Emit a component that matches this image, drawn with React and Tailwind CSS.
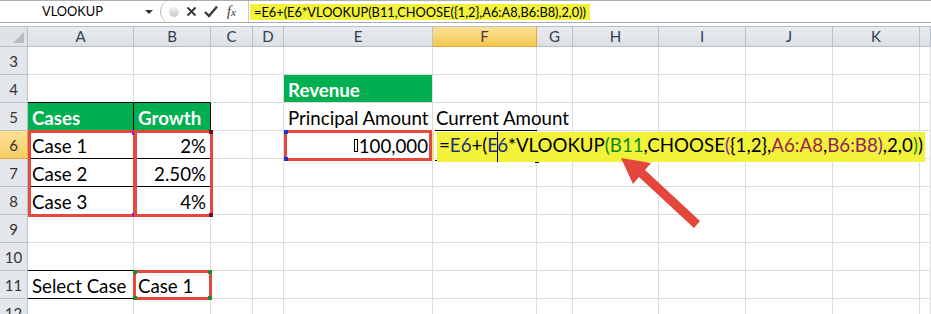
import React from 'react';

const COLS = ['A', 'B', 'C', 'D', 'E', 'F', 'G', 'H', 'I', 'J', 'K', ''];
const ROWS = [3, 4, 5, 6, 7, 8, 9, 10, 11, 12];

const FONT = { fontFamily: 'Lato, "Open Sans", sans-serif' };

function FormulaText() {
  return (
    <span className="relative z-10 bg-[#f2f23a] pl-[2px] pr-[2px] text-black whitespace-nowrap">
      =<span className="text-[#1d2f7a]">E6</span>+(<span className="text-[#1d2f7a]">E</span>
      <span className="inline-block w-px h-[30px] bg-black align-middle -mx-px"></span>
      <span className="text-[#1d2f7a]">6</span>*VLOOKUP<span className="text-[#0f8a17]">(B11</span>,CHOOSE
      <span className="text-[#8c1aa0]">(</span>{'{1,2},'}
      <span className="text-[#9c1f45]">A6:A8</span>,<span className="text-[#8f1d5f]">B6:B8</span>
      <span className="text-[#8c1aa0]">)</span>,2,0<span className="text-[#0f8a17]">)</span>)
    </span>
  );
}

const cells = {
  E4: { cls: 'bg-[#00b050] text-white font-bold pl-[4px]', node: 'Revenue' },
  A4: { cls: 'border-b-black' },
  B4: { cls: 'border-b-black' },
  A5: { cls: 'bg-[#00b050] text-white font-bold pl-[4px] border-r-black border-b-black', node: 'Cases' },
  B5: { cls: 'bg-[#00b050] text-white font-bold pl-[4px] border-r-black border-b-black', node: 'Growth' },
  E5: { cls: 'pl-[4px] overflow-hidden', node: 'Principal Amount' },
  F5: { cls: 'pl-[3px] overflow-visible', node: 'Current Amount' },
  A6: { cls: 'pl-[4px] border-r-black border-b-black', node: 'Case 1' },
  B6: { cls: 'justify-end pr-[4px] border-r-black border-b-black', node: '2%' },
  E6: {
    cls: 'justify-end pr-[4px]',
    node: (
      <>
        <span className="inline-block w-[4px] h-[13px] border border-black mr-[1px] mb-[2px]"></span>
        100,000
      </>
    ),
  },
  F6: { cls: 'pl-[4px] overflow-visible', node: <FormulaText /> },
  A7: { cls: 'pl-[4px] border-r-black border-b-black', node: 'Case 2' },
  B7: { cls: 'justify-end pr-[4px] border-r-black border-b-black', node: '2.50%' },
  A8: { cls: 'pl-[4px] border-r-black border-b-black', node: 'Case 3' },
  B8: { cls: 'justify-end pr-[4px] border-r-black border-b-black', node: '4%' },
  A10: { cls: 'border-b-black' },
  A11: { cls: 'pl-[4px] border-b-black', node: 'Select Case' },
  B11: { cls: 'pl-[4px]', node: 'Case 1' },
};

function FormulaBar() {
  return (
    <div className="flex h-[23px] border-t border-b border-[#a9aeb5] bg-white text-[12.8px] text-black">
      <div className="w-[160px] flex items-center pl-[42px] pr-[7px]">
        <span className="flex-1 leading-none">VLOOKUP</span>
        <span className="w-0 h-0 border-l-[4px] border-r-[4px] border-t-[4px] border-l-transparent border-r-transparent border-t-[#333]"></span>
      </div>
      <div className="w-[88px] flex items-center">
        <div className="self-stretch -my-px w-[20px] rounded-l-full border-l border-[#b4b9c0] flex items-center justify-end pr-[1px]">
          <span className="w-[10px] h-[10px] rounded-full bg-gradient-to-b from-[#f4f4f4] to-[#c6c6c6]"></span>
        </div>
        <svg className="ml-[6px]" width="11" height="11" viewBox="0 0 11 11">
          <path d="M1.5 1.5 L9.5 9.5 M9.5 1.5 L1.5 9.5" stroke="#3a3a3a" strokeWidth="2" />
        </svg>
        <svg className="ml-[7px]" width="14" height="13" viewBox="0 0 14 13">
          <path d="M1 7 L5 11 L13 1.5" stroke="#3a3a3a" strokeWidth="2.4" fill="none" />
        </svg>
        <span className="ml-[9px] italic text-[14px] text-[#333] leading-none" style={{ fontFamily: '"Liberation Serif", serif' }}>
          f<span className="text-[11px]">x</span>
        </span>
      </div>
      <div className="flex-1 flex items-center border-l border-[#c6cbd1] pl-[1px]">
        <span className="bg-[#f2f23a] px-[4px] leading-[16px] whitespace-nowrap">
          =E6+(E6*VLOOKUP(B11,CHOOSE({'{1,2}'},A6:A8,B6:B8),2,0))
        </span>
      </div>
    </div>
  );
}

function Arrow() {
  return (
    <svg className="absolute left-0 top-0 pointer-events-none z-20" width="931" height="314">
      <polygon
        points="621,158 651,163 645,170 700,221 694,228 639,177 633,184"
        fill="#e4463b"
      />
    </svg>
  );
}

export default function App() {
  return (
    <div className="w-[931px] h-[314px] overflow-hidden bg-white relative" style={FONT}>
      <FormulaBar />
      <div className="h-[3px] bg-white"></div>
      <div className="relative grid grid-cols-[28px_106px_77px_42px_31px_149px_104px_36px_86px_87px_87px_87px_1fr] grid-rows-[20px] auto-rows-[28px] border-t border-[#b9bfc7]">
        <div className="bg-[#dfe3e8] border-r border-b border-[#b9bfc7] flex items-end justify-end p-[3px]">
          <span className="w-[11px] h-[11px] bg-[#b7bcc2] [clip-path:polygon(100%_0,100%_100%,0_100%)]"></span>
        </div>
        {COLS.map((c, i) =>
          c === 'F' ? (
            <div key={i} className="bg-gradient-to-b from-[#fbe296] to-[#f6c74f] border-r border-b border-[#e1a93a] flex items-center justify-center text-[15px] text-[#3b3b3b]">
              {c}
            </div>
          ) : (
            <div key={i} className="bg-gradient-to-b from-[#e8ebef] to-[#dde1e6] border-r border-b border-[#b9bfc7] flex items-center justify-center text-[15px] text-[#2f3e52]">
              {c}
            </div>
          )
        )}
        {ROWS.map((r) => (
          <React.Fragment key={r}>
            {r === 6 ? (
              <div className="bg-gradient-to-b from-[#fbe091] to-[#f7cf69] border-r border-b border-[#e1a93a] flex items-center justify-center text-[15px] text-[#333] pt-[2px]">
                {r}
              </div>
            ) : (
              <div className="bg-[#e4e7eb] border-r border-b border-[#b9bfc7] flex items-center justify-center text-[15px] text-[#333] pt-[2px]">
                {r}
              </div>
            )}
            {COLS.map((c, i) => {
              const cell = cells[`${c}${r}`];
              return (
                <div
                  key={i}
                  className={`flex items-center whitespace-nowrap text-[18.7px] leading-none text-black border-r border-b border-[#dadcdd] pt-[4px] ${
                    cell ? cell.cls : ''
                  }`}
                >
                  {cell && cell.node}
                </div>
              );
            })}
          </React.Fragment>
        ))}

        {/* range highlights drawn over the cells */}
        <div className="absolute left-[28px] top-[103px] w-[108px] h-[87px] border-[3px] border-[#e5493d] pointer-events-none">
          <span className="absolute right-[-3px] top-[-2px] w-[4px] h-[4px] bg-[#9b1bd1]"></span>
          <span className="absolute right-[-3px] bottom-[-3px] w-[4px] h-[4px] bg-[#9b1bd1]"></span>
        </div>
        <div className="absolute left-[134px] top-[103px] w-[79px] h-[87px] border-[3px] border-[#e5493d] pointer-events-none">
          <span className="absolute right-[-3px] top-[-3px] w-[4px] h-[4px] bg-[#6b1020]"></span>
          <span className="absolute right-[-3px] bottom-[-3px] w-[4px] h-[4px] bg-[#6b1020]"></span>
        </div>
        <div className="absolute left-[284px] top-[103px] w-[148px] h-[31px] border-[3px] border-[#e5493d] pointer-events-none">
          <span className="absolute left-[-3px] top-[-3px] w-[4px] h-[4px] bg-[#1f2fd8]"></span>
          <span className="absolute left-[-3px] bottom-[-3px] w-[4px] h-[4px] bg-[#1f2fd8]"></span>
        </div>
        <div className="absolute left-[433px] top-[105px] w-[1px] h-[28px] bg-[#f2e53a]"></div>
        <div className="absolute left-[435px] top-[103px] w-[102px] h-[31px] border-t border-b border-black pointer-events-none">
          <span className="absolute right-[-2px] bottom-[-3px] w-[4px] h-[4px] bg-black"></span>
        </div>
        <div className="absolute left-[133px] top-[243px] w-[79px] h-[30px] border-[3px] border-[#e5493d] pointer-events-none">
          <span className="absolute left-[-3px] top-[-3px] w-[4px] h-[4px] bg-[#1b8a2b]"></span>
          <span className="absolute right-[-3px] top-[-3px] w-[4px] h-[4px] bg-[#1b8a2b]"></span>
          <span className="absolute left-[-3px] bottom-[-3px] w-[4px] h-[4px] bg-[#1b8a2b]"></span>
          <span className="absolute right-[-3px] bottom-[-3px] w-[4px] h-[4px] bg-[#1b8a2b]"></span>
        </div>
      </div>
      <Arrow />
    </div>
  );
}
